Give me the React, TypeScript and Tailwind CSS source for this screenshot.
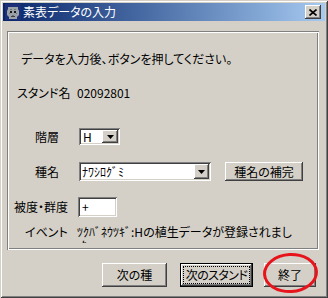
const raised =
  "bg-[#d4d0c8] shadow-[inset_-1px_-1px_0_#404040,inset_1px_1px_0_#ffffff,inset_-2px_-2px_0_#808080]";
const sunken =
  "bg-white shadow-[inset_1px_1px_0_#808080,inset_-1px_-1px_0_#ffffff,inset_2px_2px_0_#404040,inset_-2px_-2px_0_#d4d0c8]";

function TitleIcon() {
  return (
    <svg width="16" height="16" viewBox="0 0 16 16" className="shrink-0">
      <rect x="0" y="0" width="16" height="16" fill="#1c2f78" />
      <path d="M3 3h10v2l1 2v4l-2 2v2H4v-2l-2-2V7l1-2z" fill="#9aa2a8" />
      <path d="M5 5h2v1H5zM9 5h2v1H9zM4 9h1v1H4zM11 9h1v1h-1zM7 11h2v1H7z" fill="#6c7478" />
      <rect x="5" y="7" width="2" height="2" fill="#1a1a1a" />
      <rect x="9" y="7" width="2" height="2" fill="#1a1a1a" />
      <rect x="6" y="12" width="4" height="1" fill="#404040" />
    </svg>
  );
}

function DropArrow({ className }: { className: string }) {
  return (
    <div className={`${raised} ${className} flex items-center justify-center shrink-0`}>
      <svg width="7" height="4" viewBox="0 0 7 4">
        <path d="M0 0h7L3.5 4z" fill="#000" />
      </svg>
    </div>
  );
}

function WinButton({
  label,
  width,
  focused,
}: {
  label: string;
  width: string;
  focused?: boolean;
}) {
  if (focused) {
    return (
      <div className={`${width} h-[24px] border border-black flex`}>
        <div className={`${raised} flex-1 p-[2px] flex`}>
          <div className="flex-1 border border-dotted border-black flex items-center justify-center leading-none whitespace-nowrap tracking-[-0.6px]">
            {label}
          </div>
        </div>
      </div>
    );
  }
  return (
    <div className={`${raised} ${width} h-[24px] flex items-center justify-center leading-none whitespace-nowrap`}>
      {label}
    </div>
  );
}

export default function App() {
  return (
    <div className="w-[328px] h-[298px] bg-[#d4d0c8] p-[3px] flex flex-col text-[12px] text-black font-['Noto_Sans_CJK_JP','Noto_Sans',sans-serif] [font-feature-settings:'palt'] shadow-[inset_1px_1px_0_#d4d0c8,inset_-1px_-1px_0_#404040,inset_2px_2px_0_#ffffff,inset_-2px_-2px_0_#808080]">
      {/* title bar */}
      <div className="h-[18px] flex items-center pl-[2px] pr-[4px] bg-linear-to-r from-[#0a246a] to-[#a6caf0]">
        <TitleIcon />
        <span className="ml-[2px] text-white text-[12px] leading-none">素表データの入力</span>
        <div className={`${raised} ml-auto w-[16px] h-[14px] flex items-center justify-center`}>
          <svg width="8" height="7" viewBox="0 0 8 7">
            <path d="M0.5 0.5L7.5 6.5M7.5 0.5L0.5 6.5" stroke="#000" strokeWidth="1.6" />
          </svg>
        </div>
      </div>

      <div className="flex flex-col pl-[4px] pt-[10px]">
        {/* group frame */}
        <div className="w-[312px] h-[219px] overflow-hidden flex flex-col pt-[20px] shadow-[inset_1px_1px_0_#808080,inset_-1px_-1px_0_#ffffff,inset_2px_2px_0_#ffffff,inset_-2px_-2px_0_#808080]">
          <div className="h-[16px] flex items-center pl-[14px]">
            データを入力後、ボタンを押してください。
          </div>

          <div className="mt-[18px] h-[16px] flex items-center pl-[10px]">
            <span className="w-[60px]">スタンド名</span>
            <span>02092801</span>
          </div>

          <div className="mt-[27px] h-[17px] flex items-center pl-[28px]">
            <span className="w-[44px]">階層</span>
            <div className={`${sunken} w-[41px] h-[17px] flex items-center p-[2px]`}>
              <span className="flex-1 pl-[2px] leading-none">H</span>
              <DropArrow className="w-[16px] h-[13px]" />
            </div>
          </div>

          <div className="mt-[17px] h-[19px] flex items-center pl-[28px]">
            <span className="w-[44px]">種名</span>
            <div className={`${sunken} w-[132px] h-[19px] flex items-center p-[2px]`}>
              <span className="flex-1 pl-[1px] leading-none">ﾅﾜｼﾛｸﾞﾐ</span>
              <DropArrow className="w-[15px] h-[15px]" />
            </div>
            <div className="ml-[14px]">
              <div className={`${raised} w-[78px] h-[19px] flex items-center justify-center leading-none whitespace-nowrap`}>
                種名の補完
              </div>
            </div>
          </div>

          <div className="mt-[16px] h-[20px] flex items-center pl-[7px]">
            <span className="w-[64px]">被度・群度</span>
            <div className={`${sunken} w-[39px] h-[20px] flex items-center pl-[4px] leading-none`}>+</div>
          </div>

          <div className="mt-[8px] flex items-start pl-[18px]">
            <span className="w-[52px] h-[14px] leading-[14px]">イベント</span>
            <div className="h-[18px] overflow-hidden leading-[14px] whitespace-nowrap">
              <div>ﾂｸﾊﾞﾈｳﾂｷﾞ:Hの植生データが登録されまし</div>
              <div className="pl-[2px]">た</div>
            </div>
          </div>
        </div>

        {/* buttons */}
        <div className="mt-[13px] flex items-center">
          <div className="ml-[95px]">
            <WinButton label="次の種" width="w-[65px]" />
          </div>
          <div className="ml-[13px]">
            <WinButton label="次のスタンド" width="w-[73px]" focused />
          </div>
          <div className="ml-[11px] relative">
            <WinButton label="終了" width="w-[52px]" />
            <div className="absolute left-[-1px] top-[-10px] w-[55px] h-[40px] rounded-[50%] border-[3px] border-[#e8141c] -rotate-3 pointer-events-none" />
          </div>
        </div>
      </div>
    </div>
  );
}
